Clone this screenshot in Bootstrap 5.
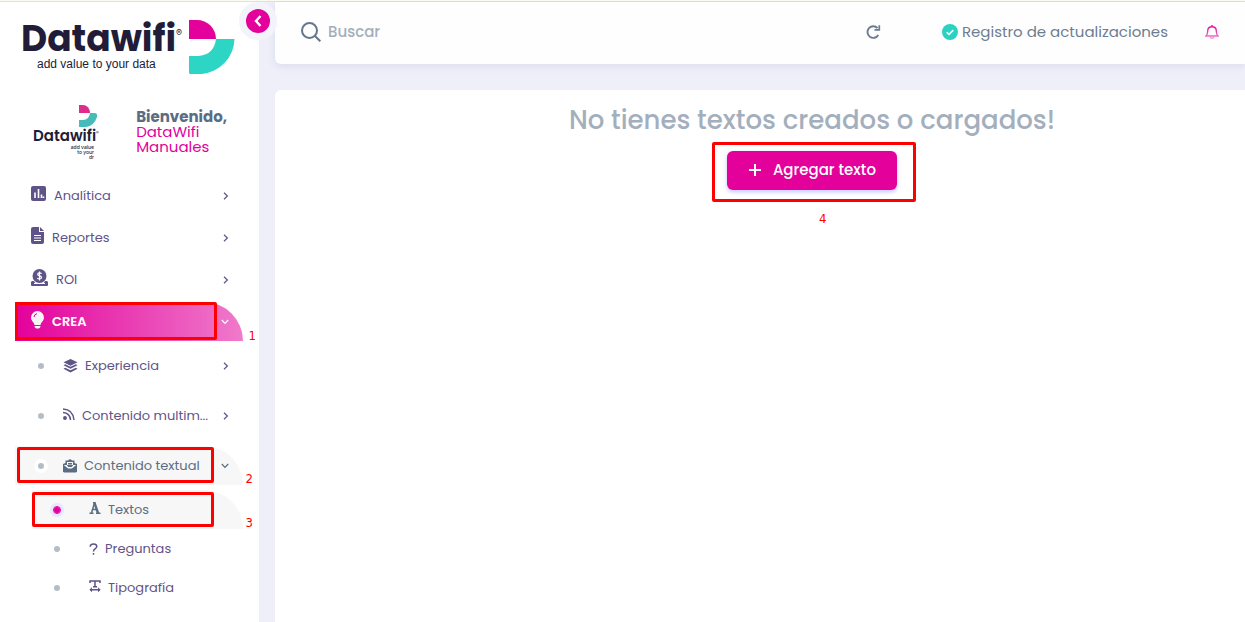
<!DOCTYPE html>
<html lang="es">
<head>
<meta charset="utf-8">
<meta name="viewport" content="width=device-width, initial-scale=1">
<title>Datawifi - Textos</title>
<link href="https://cdn.jsdelivr.net/npm/bootstrap@5.3.0/dist/css/bootstrap.min.css" rel="stylesheet">
<style>
  :root { --pink: #e3009b; --violet: #5f5487; --slate: #5b6d82; --pale: #a3afbd; }
  body { font-family: Poppins, Inter, sans-serif; background: #efeffa; border-top: 1px solid #fafcf0; color: var(--slate); }
  .shell { border-top: 1px solid #dfe4d0; min-height: calc(100vh - 1px); }
  .side { width: 259px; background: #fff; }
  .brand { height: 88px; padding: 18px 0 0 21px; color: #211c38; }
  .brand-name { font-size: 36px; line-height: 38px; font-weight: 700; }
  .brand-tag { font: 400 12px/12px "Liberation Sans", sans-serif; padding: 0 0 0 16px; }
  .brand-mark { margin: 0 24px 0 0; }
  .reg { font: 400 9px/26px Inter, sans-serif; }
  .toggle-btn { position: absolute; top: 0; right: -18px; width: 38px; height: 38px; border: 7px solid #f3f3fa; background: var(--pink); z-index: 2; }
  .user { height: 86px; padding: 15px 32px 0 33px; }
  .user-logo { width: 66px; color: #211c38; }
  .user-logo svg { margin-right: 2px; }
  .user-logo-name { font-size: 15px; line-height: 18px; font-weight: 600; }
  .user-logo-reg { font: 400 4px/12px Inter, sans-serif; }
  .user-logo-tag { font: 500 5px/5px Inter, sans-serif; padding-right: 5px; }
  .user-text { font-size: 15px; line-height: 15px; padding-top: 4px; }
  .user-text span { color: var(--pink); }
  .menu { padding-left: 15px; padding-right: 16px; font-size: 13px; }
  .menu-link { position: relative; height: 39px; padding: 0 14px 0 16px; color: var(--violet); text-decoration: none; border-radius: 0 39px 0 0; }
  .menu > li { margin-bottom: 3px; }
  .menu-link.current { background: linear-gradient(90deg, #e3009b, #f07acb); color: #fff; font-weight: 600; }
  .sub { padding-top: 5px; }
  .sub > li { margin-bottom: 11px; }
  .sub .menu-link { padding-left: 23px; font-weight: 400; }
  .sub .menu-link.opened { background: #f7f7f8; color: var(--slate); }
  .subsub { padding-top: 5px; }
  .sub .subsub .menu-link { margin-left: 17px; padding-left: 22px; }
  .bullet { width: 6px; height: 6px; border-radius: 50%; background: #b4bdc6; flex: none; margin-right: 19px; }
  .bullet.on { background: var(--pink); outline: 1px solid var(--pink); box-shadow: 0 0 0 4px #e7e7ff; }
  .opened .bullet { box-shadow: 0 0 0 4px #fff; }
  .opened .bullet.on { box-shadow: 0 0 0 4px #e7e7ff; }
  .subsub .bullet { margin-right: 29px; }
  .icon-gap { margin-right: 7px; }
  .callout-box { position: absolute; border: 3px solid #f00; border-radius: 2px; pointer-events: none; }
  .callout-num { position: absolute; color: #f00; font: 400 13px/16px "DejaVu Sans Condensed", "Noto Sans", sans-serif; }
  .box-crea { inset: 0 26px 1px 0; }
  .box-textual { inset: 1px 29px 2px 2px; }
  .box-textos { inset: 2px 29px 2px 0; }
  .box-agregar { inset: -9px -19px -12px -15px; }
  .num-side { right: -13px; bottom: -3px; }
  .num-low { right: -10px; bottom: -2px; }
  .num-agregar { left: 92px; top: 60px; }
  .main { padding-left: 16px; }
  .topbar { height: 62px; background: #fefefe; border-radius: 0 0 0 6px; padding: 0 26px 2px; box-shadow: 0 2px 8px rgba(67,89,113,.12); }
  .search-box { border: 0; background: none; font-size: 15px; font-weight: 500; width: 100%; outline: none; }
  .search-box::placeholder { color: var(--pale); opacity: 1; }
  .topbar label { margin-right: 7px; }
  .topbar a { color: #6b7d90; text-decoration: none; font-size: 15px; font-weight: 400; }
  .registro { margin-left: 61px; }
  .bell { margin-left: 37px; }
  .panel { margin-top: 26px; background: #fff; border-radius: 6px 0 0 0; padding: 14px 0 0 104px; }
  .empty-title { font-size: 26px; line-height: 32px; font-weight: 500; color: var(--pale); margin-bottom: 15px; white-space: nowrap; }
  .btn-agregar, .btn-agregar:hover { background: var(--pink); color: #fff; font-size: 15px; line-height: 23px; font-weight: 500; padding: 6px 20px 8px; border-radius: 6px; border-width: 1px; box-shadow: 0 2px 4px rgba(105,108,255,.4); width: 170px; }
</style>
</head>
<body>
<svg class="d-none">
  <symbol id="chev" viewBox="0 0 6 8"><path d="M1 .8 4.4 4 1 7.200" fill="none" stroke="currentColor" stroke-width="1.200"/></symbol>
  <symbol id="chev-down" viewBox="0 0 8 6"><path d="M.8 1 4 4.400 7.200 1" fill="none" stroke="currentColor" stroke-width="1.200"/></symbol>
</svg>
<div class="shell d-flex">
  <aside class="side position-relative flex-shrink-0">
    <div class="brand d-flex">
      <div>
        <div class="d-flex"><span class="brand-name">Datawifi</span><span class="reg">®</span></div>
        <div class="brand-tag">add value to your data</div>
      </div>
      <svg class="brand-mark ms-auto flex-shrink-0" width="46" height="55" viewBox="0 0 46 55"><path d="M0 0h8a19 19 0 0 1 19 19H0z" fill="#e3009b"/><path d="M27 19h18.500a36 36 0 0 1-33 35H1l-1-1V36h9q16-1 18-17z" fill="#2cd5c4"/></svg>
    </div>
    <button class="toggle-btn rounded-circle p-0 d-flex align-items-center justify-content-center" aria-label="Contraer menú"><svg width="10" height="14" viewBox="0 0 10 14"><path d="M7.500 2 3 7l4.500 5" fill="none" stroke="#fff" stroke-width="2.400"/></svg></button>
    <div class="user d-flex justify-content-between">
      <div class="user-logo text-end">
        <svg class="d-block ms-auto" width="18" height="22" viewBox="0 0 18 22"><path d="M0 0h4a7 8 0 0 1 7 8H0z" fill="#dd2c8c"/><path d="M11 8h4q4 0 3 4-3 9-11 10H0v-7h4q6 0 7-7z" fill="#45bcb9"/></svg>
        <div class="d-flex"><span class="user-logo-name">Datawifi</span><span class="user-logo-reg">®</span></div>
        <div class="user-logo-tag">add value<br>to your<br>dr</div>
      </div>
      <div class="user-text"><strong>Bienvenido,</strong><br><span>DataWifi<br>Manuales</span></div>
    </div>
    <ul class="menu list-unstyled mb-0">
      <li><a href="#" class="menu-link d-flex align-items-center">
        <svg class="icon-gap mb-1" width="16" height="16" viewBox="0 0 16 16"><rect width="15" height="15" rx="2" fill="currentColor"/><path d="M4 12V6.500M7.500 12V3M10.500 12V8.500M12.500 12v-1.500" stroke="#fff" stroke-width="1.600"/></svg>
        Analítica<svg class="ms-auto" width="6" height="8"><use href="#chev"/></svg></a></li>
      <li><a href="#" class="menu-link d-flex align-items-center">
        <svg class="icon-gap mb-1" width="14" height="17" viewBox="0 0 14 17"><path d="M2 0h6v5h5v10a2 2 0 0 1-2 2H2a2 2 0 0 1-2-2V2a2 2 0 0 1 2-2zm7 0 4 4H9z" fill="currentColor"/><path d="M3 8.500h7M3 11h7M3 13.500h7" stroke="#fff" stroke-width="1.100"/></svg>
        Reportes<svg class="ms-auto" width="6" height="8"><use href="#chev"/></svg></a></li>
      <li><a href="#" class="menu-link d-flex align-items-center">
        <svg class="icon-gap mb-1" width="18" height="18" viewBox="0 0 18 18"><path d="M1 12h2l1.500 2.500h8L14 12h2l1 1v3.500l-1 .5H1l-1-.5V13z" fill="currentColor"/><circle cx="8.500" cy="7" r="7" fill="currentColor"/><path d="M10.500 4.800q-.5-1-2-1-1.800 0-1.800 1.400 0 1.200 1.800 1.600 2 .4 2 1.700 0 1.500-2 1.500-1.600 0-2.100-1M8.500 2.500v9M3 14.500h11" fill="none" stroke="#fff" stroke-width="1.200"/></svg>
        ROI<svg class="ms-auto" width="6" height="8"><use href="#chev"/></svg></a></li>
      <li><a href="#" class="menu-link current d-flex align-items-center">
        <svg class="icon-gap mb-1" width="14" height="18" viewBox="0 0 14 18"><path d="M6.500 0A6.500 6.500 0 0 1 13 6.500C13 10 10 11 9.500 14h-6C3 11 0 10 0 6.500A6.500 6.500 0 0 1 6.500 0zM3.500 15h6q-.3 2.600-3 2.600t-3-2.600z" fill="#f8f5f7"/><path d="M3 6q.2-2.800 3-3.300" fill="none" stroke="#e3009b"/></svg>
        CREA<svg class="ms-auto" width="8" height="6"><use href="#chev-down"/></svg>
        <span class="callout-box box-crea"></span><span class="callout-num num-side">1</span></a>
        <ul class="sub list-unstyled">
          <li><a href="#" class="menu-link d-flex align-items-center"><span class="bullet"></span>
            <svg class="icon-gap" width="15" height="14" viewBox="0 0 15 14" fill="currentColor"><path d="M7.500 0l7 3.300-7 3.400L.5 3.300zM2.200 5.200l5.300 2.600 5.300-2.600 1.700 1.100-7 3.500-7-3.500zM2.200 8.700l5.300 2.600 5.300-2.600 1.700 1.100-7 3.600L.5 9.800z"/></svg>
            Experiencia<svg class="ms-auto" width="6" height="8"><use href="#chev"/></svg></a></li>
          <li><a href="#" class="menu-link d-flex align-items-center"><span class="bullet"></span>
            <svg class="icon-gap mb-1" width="12" height="12" viewBox="0 0 12 12" fill="none" stroke="currentColor" stroke-width="1.500"><path d="M0 1q10 .5 11 11M0 4.500Q7 5 7.500 12"/><circle cx="2" cy="10" r="1.200" fill="currentColor" /></svg>
            Contenido multim...<svg class="ms-auto" width="6" height="8"><use href="#chev"/></svg></a></li>
          <li class="mb-0"><a href="#" class="menu-link opened d-flex align-items-center"><span class="bullet"></span>
            <svg class="icon-gap" width="14" height="14" viewBox="0 0 14 14"><path d="M2.500 1.500H5Q7-.8 9 1.500h2.500V4L14 5v7.500l-1 1H1l-1-1V5l2.500-1z" fill="currentColor"/><path d="M4 3h6v3.500L8.500 8h-3L4 6.500zM.8 6 5 9.500h4L13.200 6" fill="#f7f7f8"/><path d="M5 4.500h4M5 6h4" stroke="currentColor"/><path d="M0 7l5 3h4l5-3v6H0z" fill="currentColor"/></svg>
            Contenido textual<svg class="ms-auto" width="8" height="6"><use href="#chev-down"/></svg>
            <span class="callout-box box-textual"></span><span class="callout-num num-low">2</span></a>
            <ul class="subsub list-unstyled">
              <li><a href="#" class="menu-link opened d-flex align-items-center"><span class="bullet on"></span>
                <svg class="icon-gap mb-1" width="12" height="12" viewBox="0 0 12 12" fill="none" stroke="currentColor"><path d="M5.500 1 2.500 11M3.500 7.500h4" stroke-width="1.500"/><path d="M5.500 1 9 11" stroke-width="2.400"/><path d="M.5 11.200H4.500M7 11.200h4.500M4 .8h2.700" stroke-width="1.400"/></svg>
                Textos<span class="callout-box box-textos"></span><span class="callout-num num-low">3</span></a></li>
              <li><a href="#" class="menu-link d-flex align-items-center"><span class="bullet"></span>
                <svg class="icon-gap" width="9" height="12" viewBox="0 0 9 12" fill="none" stroke="currentColor" stroke-width="1.500"><path d="M1.200 3.800Q1.200 1 4.500 1t3.300 2.600C7.800 5.800 4.500 5.500 4.500 8.500M4.500 10v1.800"/></svg>
                Preguntas</a></li>
              <li><a href="#" class="menu-link d-flex align-items-center"><span class="bullet"></span>
                <svg class="icon-gap mb-1" width="12" height="12" viewBox="0 0 12 12" fill="none" stroke="currentColor" stroke-width="1.500"><path d="M1 3V1h10v2M6 1v6M4 6.800h4M1 9.700h10"/><path d="M3 7.500.8 9.700 3 12M9 7.500l2.200 2.200L9 12" fill="currentColor" stroke-width=".5"/></svg>
                Tipografía</a></li>
            </ul>
          </li>
        </ul>
      </li>
    </ul>
  </aside>
  <div class="main flex-grow-1 d-flex flex-column">
    <header class="topbar d-flex align-items-center">
      <label for="buscar" class="d-flex"><svg width="20" height="20" viewBox="0 0 20 20" fill="none" stroke="#64778c" stroke-width="2"><circle cx="8.500" cy="8.500" r="7.500"/><path d="m14 14 5.300 5.300"/></svg></label>
      <div class="flex-grow-1"><input id="buscar" class="search-box p-0" type="text" placeholder="Buscar" aria-label="Buscar"></div>
      <a href="#" aria-label="Actualizar" class="d-flex"><svg width="16" height="16" viewBox="0 0 16 16" fill="none" stroke="currentColor" stroke-width="1.900"><path d="M12.600 4.200A5.800 5.800 0 1 0 13.300 11"/><path d="M14.300 1.200v4.700H9.500" stroke-width="1.700"/></svg></a>
      <a href="#" class="d-flex align-items-center registro"><svg class="me-1" width="16" height="16" viewBox="0 0 16 16"><circle cx="8" cy="8" r="8" fill="#2bd1c1"/><path d="m4.700 8.200 2.300 2.200 4.300-4.300" fill="none" stroke="#fff" stroke-width="1.500"/></svg>Registro de actualizaciones</a>
      <a href="#" aria-label="Notificaciones" class="bell d-flex"><svg width="14" height="14" viewBox="0 0 14 14" fill="none" stroke="url(#bellg)" stroke-width="1.400"><defs><linearGradient id="bellg" x1="0" y1="0" x2="0" y2="1"><stop stop-color="#e3009b"/><stop offset="1" stop-color="#f07acb"/></linearGradient></defs><path d="M1 11q1.700-1.500 1.700-5Q2.700 1.700 7 1.700T11.300 6q0 3.500 1.700 5zM7 0v2M5 12.500q2 1.300 4 0"/></svg></a>
    </header>
    <main class="panel flex-grow-1 text-center">
      <h1 class="empty-title">No tienes textos creados o cargados!</h1>
      <div class="position-relative d-inline-block">
        <button class="btn btn-agregar d-flex align-items-center justify-content-between"><svg width="14" height="14" viewBox="0 0 14 14"><path d="M7 1v12M1 7h12" stroke="#fff" stroke-width="2"/></svg>Agregar texto</button>
        <span class="callout-box box-agregar"></span><span class="callout-num num-agregar">4</span>
      </div>
    </main>
  </div>
</div>
<script src="https://cdn.jsdelivr.net/npm/bootstrap@5.3.0/dist/js/bootstrap.bundle.min.js"></script>
</body>
</html>
